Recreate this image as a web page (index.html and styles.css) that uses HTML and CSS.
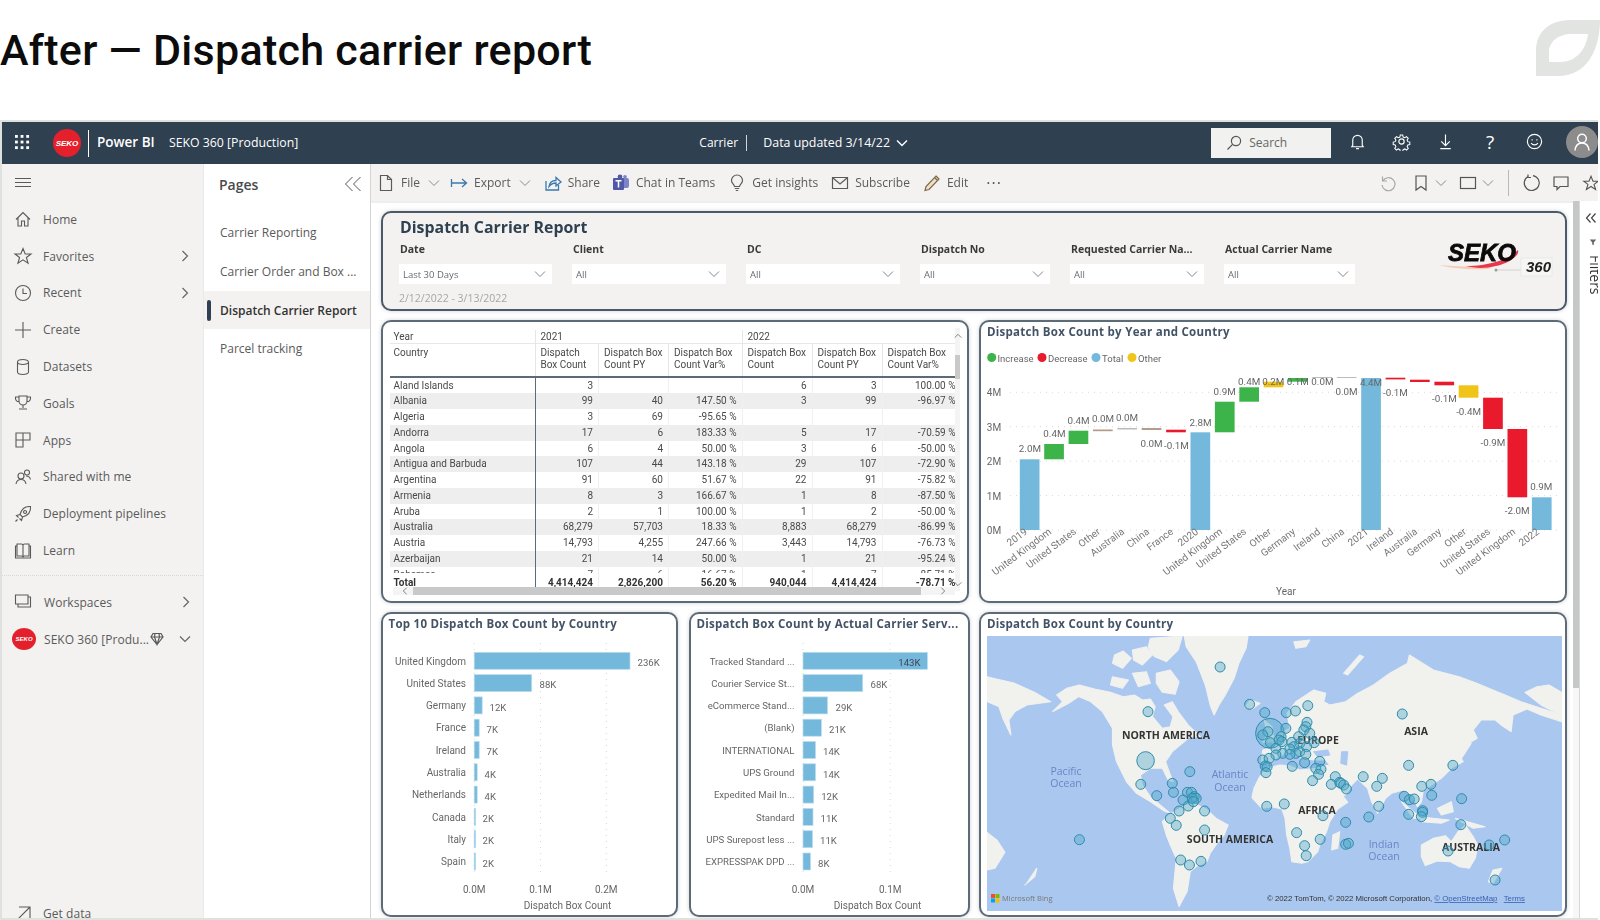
FILE: index.html
```html
<!DOCTYPE html>
<html lang="en">
<head>
<meta charset="utf-8">
<title>After — Dispatch carrier report</title>
<link rel="stylesheet" href="styles.css">
</head>
<body>
<svg class="sprite" aria-hidden="true">
  <symbol id="chev-d" viewBox="0 0 12 12"><path d="M1 3.5L6 8.5L11 3.5"/></symbol>
  <symbol id="chev-r" viewBox="0 0 12 12"><path d="M3.5 1L8.5 6L3.5 11"/></symbol>
  <symbol id="star" viewBox="0 0 20 20"><path d="M10 2.5L12.2 8H18L13.4 11.5L15.1 17.3L10 13.9L4.9 17.3L6.6 11.5L2 8H7.8Z"/></symbol>
</svg>
<header class="slide-head">
  <h1 class="slide-title">After — Dispatch carrier report</h1>
  <svg class="leaf" viewBox="0 0 64 56"><path class="leaf-shape" fill-rule="evenodd" d="M0 56V32C0 12 12 1 34 0H64C64 28 52 56 22 56ZM13 42H24C40 42 50 30 52 14H36C22 14 13 22 13 32Z"/></svg>
</header>
<div class="app">
  <div class="topbar">
    <svg class="waffle" viewBox="0 0 16 16"><g class="waffle-dots"><rect x="0" y="0" width="3" height="3"/><rect x="6" y="0" width="3" height="3"/><rect x="12" y="0" width="3" height="3"/><rect x="0" y="6" width="3" height="3"/><rect x="6" y="6" width="3" height="3"/><rect x="12" y="6" width="3" height="3"/><rect x="0" y="12" width="3" height="3"/><rect x="6" y="12" width="3" height="3"/><rect x="12" y="12" width="3" height="3"/></g></svg>
    <span class="seko-dot seko-dot-top">SEKO</span>
    <span class="brand">Power BI</span>
    <span class="ws-name">SEKO 360 [Production]</span>
    <span class="crumb">Carrier</span>
    <span class="crumb-sep"></span>
    <span class="crumb-data">Data updated 3/14/22</span>
    <svg class="ic-12 ic-white"><use href="#chev-d"/></svg>
    <div class="search">
      <svg class="ic-16 search-ic" viewBox="0 0 16 16"><circle cx="10" cy="6" r="4.6"/><path d="M6.6 9.4L1.5 14.5"/></svg>
      <span>Search</span>
    </div>
    <svg class="tb-ic tb-first" viewBox="0 0 20 20"><path d="M5 14V8.5a5 5 0 0 1 10 0V14L16 15.5H4Z M8.5 17.5h3"/></svg>
    <svg class="tb-ic" viewBox="0 0 20 20"><circle cx="10" cy="10" r="2.8"/><path d="M8.6 2.5h2.800l.5 2.300 1.900.8 2-1.300 2 2-1.300 2 .8 1.900 2.300.5v2.800l-2.300.5-.8 1.900 1.300 2-2 2-2-1.300-1.900.8-.5 2.300h-2.800l-.5-2.300-1.900-.8-2 1.300-2-2 1.300-2-.8-1.900-2.300-.5v-2.800l2.300-.5.8-1.900-1.300-2 2-2 2 1.300 1.900-.8Z" transform="translate(.9 .9) scale(.91)"/></svg>
    <svg class="tb-ic" viewBox="0 0 20 20"><path d="M10 2.500V14 M5.500 9.800L10 14.300L14.500 9.800 M4.500 17.500H15.500"/></svg>
    <span class="help">?</span>
    <svg class="tb-ic" viewBox="0 0 20 20"><circle cx="10" cy="10" r="7.500"/><path d="M6.500 11.500a4 4 0 0 0 7 0 M7.500 7.500v1.500 M12.500 7.500v1.500"/></svg>
    <span class="avatar"><svg class="avatar-ic" viewBox="0 0 20 20"><circle cx="10" cy="6.500" r="4.300"/><path d="M3 18.500c.5-5 3.500-7.500 7-7.500s6.500 2.500 7 7.500"/></svg></span>
  </div>

  <div class="main">
    <nav class="nav">
      <div class="nav-burger"><svg class="nav-ic" viewBox="0 0 20 20"><path d="M2 5.500H18 M2 9.500H18 M2 13.500H18"/></svg></div>
      <a class="nav-item"><svg class="nav-ic" viewBox="0 0 20 20"><path d="M3 10.500L10 3.500L17 10.500 M5 9V17H8.500V12H11.500V17H15V9"/></svg>Home</a>
      <a class="nav-item"><svg class="nav-ic"><use href="#star"/></svg>Favorites<svg class="ic-12 nav-chev"><use href="#chev-r"/></svg></a>
      <a class="nav-item"><svg class="nav-ic" viewBox="0 0 20 20"><circle cx="10" cy="10" r="7.500"/><path d="M10 5.500V10.500H14"/></svg>Recent<svg class="ic-12 nav-chev"><use href="#chev-r"/></svg></a>
      <a class="nav-item"><svg class="nav-ic" viewBox="0 0 20 20"><path d="M10 2V18 M2 10H18"/></svg>Create</a>
      <a class="nav-item"><svg class="nav-ic" viewBox="0 0 20 20"><path d="M4.500 5a5.500 2.500 0 0 1 11 0V15a5.500 2.500 0 0 1-11 0Z M4.500 5a5.500 2.500 0 0 0 11 0"/></svg>Datasets</a>
      <a class="nav-item"><svg class="nav-ic" viewBox="0 0 20 20"><path d="M6 3H14V8a4 4 0 0 1-8 0Z M6 4H2.500V5.500A3 3 0 0 0 6 8.500 M14 4H17.500V5.500A3 3 0 0 1 14 8.500 M10 12V15 M6 16H14"/></svg>Goals</a>
      <a class="nav-item"><svg class="nav-ic" viewBox="0 0 20 20"><path d="M3 3H17V10H10V17H3Z M10 3V10 M3 10H10"/></svg>Apps</a>
      <a class="nav-item"><svg class="nav-ic" viewBox="0 0 20 20"><circle cx="8" cy="9" r="3"/><path d="M3 17c.5-3 2.500-4.500 5-4.500s4.500 1.500 5 4.500"/><circle cx="14" cy="5.500" r="2.500"/><path d="M13 9c2.500 0 4 1 4.500 3.500"/></svg>Shared with me</a>
      <a class="nav-item"><svg class="nav-ic" viewBox="0 0 20 20"><path d="M17.500 2.500c-5-.5-9 2.500-10.500 8L9.500 13c5.500-1.500 8.500-5.500 8-10.500Z M7 10.500L3.500 11.500L5.500 13.500 M9.500 13L8.500 16.500L6.500 14.500 M12 6.500a1.500 1.500 0 1 0 .1 0 M4.500 15.500L2.500 17.500"/></svg>Deployment pipelines</a>
      <a class="nav-item"><svg class="nav-ic" viewBox="0 0 20 20"><path d="M4 3H8.500A1.500 1.500 0 0 1 10 4.500V16A1.500 1.500 0 0 0 8.500 15H4Z M16 3H11.500A1.500 1.500 0 0 0 10 4.500V16A1.500 1.500 0 0 1 11.500 15H16Z M4 5H2.500V17H17.500V5H16"/></svg>Learn</a>
      <div class="nav-rule"></div>
      <a class="nav-item nav-item-ws"><svg class="nav-ic" viewBox="0 0 20 20"><path d="M2.500 3H15V12H2.500Z M15 5H17.500V15H5V12"/></svg>Workspaces<svg class="ic-12 nav-chev"><use href="#chev-r"/></svg></a>
      <a class="nav-item nav-item-seko"><span class="seko-dot seko-dot-nav">SEKO</span><span class="seko-name">SEKO 360 [Produ...</span><svg class="ic-14" viewBox="0 0 14 14"><path d="M3 1.500H11L13 5L7 12.500L1 5Z M1 5H13 M5 1.500L4.500 5L7 12.500L9.500 5L9 1.500"/></svg><svg class="ic-12 nav-chev"><use href="#chev-d"/></svg></a>
      <a class="nav-item nav-item-get"><svg class="nav-ic" viewBox="0 0 20 20"><path d="M3 17L17 3 M6 3H17V14"/></svg>Get data</a>
    </nav>

    <aside class="pages">
      <div class="pages-head"><span class="pages-title">Pages</span>
        <svg class="pages-collapse" viewBox="0 0 18 16"><path d="M8.500 1L1.500 8L8.500 15 M16.500 1L9.500 8L16.500 15"/></svg></div>
      <a class="page-item">Carrier Reporting</a>
      <a class="page-item">Carrier Order and Box ...</a>
      <a class="page-item page-item-active">Dispatch Carrier Report</a>
      <a class="page-item">Parcel tracking</a>
    </aside>

    <section class="content">
      <div class="toolbar">
        <span class="tool tool-file"><svg class="ic-18" viewBox="0 0 18 18"><path d="M3.500 1.500H10.500L14.500 5.500V16.500H3.500Z M10.500 1.500V5.500H14.500"/></svg>File<svg class="ic-12 tool-chev"><use href="#chev-d"/></svg></span>
        <span class="tool tool-export"><svg class="ic-18 ic-blue" viewBox="0 0 18 18"><path d="M1.500 5V13 M1.500 9H16 M12 5L16.500 9L12 13"/></svg>Export<svg class="ic-12 tool-chev"><use href="#chev-d"/></svg></span>
        <span class="tool tool-share"><svg class="ic-18 ic-blue" viewBox="0 0 18 18"><path d="M2 7V16H14.500V11 M5 12.500c.5-4 3-6 7-6V3.500L17 8L12 12V9C9 9 7 10 5 12.500Z"/></svg>Share</span>
        <span class="tool tool-teams"><svg class="ic-18" viewBox="0 0 18 18"><rect class="teams-a" x="9" y="4" width="8" height="10" rx="2"/><circle class="teams-a" cx="13" cy="2.800" r="1.800"/><circle class="teams-b" cx="8" cy="2.800" r="2.400"/><rect class="teams-b" x="1" y="4" width="11" height="12" rx="1"/><path class="teams-t" d="M3.500 6.800H9.500 M6.500 6.800V13.500"/></svg>Chat in Teams</span>
        <span class="tool tool-ins"><svg class="ic-18" viewBox="0 0 18 18"><path d="M6.500 12.500C6 10 3.500 9.500 3.500 6.500a5.500 5.500 0 0 1 11 0C14.500 9.500 12 10 11.500 12.500Z M6.800 14.500H11.200 M7.800 16.500H10.200"/></svg>Get insights</span>
        <span class="tool tool-sub"><svg class="ic-18" viewBox="0 0 18 18"><path d="M1.500 3.500H16.500V14.500H1.500Z M2 4L9 10L16 4"/></svg>Subscribe</span>
        <span class="tool tool-edit"><svg class="ic-18" viewBox="0 0 18 18"><path class="pencil" d="M13 2L16 5L6 15.500L2 16.500L3 12.500Z M11.500 3.500L14.500 6.500"/></svg>Edit</span>
        <span class="tool-dots">···</span>
        <span class="tool-right">
          <svg class="ic-18 ic-faint" viewBox="0 0 18 18"><path d="M3.500 2.500V7H8 M3.800 7a6.500 6.500 0 1 1-.8 4"/></svg>
          <svg class="ic-18 gap-a" viewBox="0 0 18 18"><path d="M4 2H14V16L9 12.500L4 16Z"/></svg>
          <svg class="ic-12 tool-chev gap-b"><use href="#chev-d"/></svg>
          <svg class="ic-18 gap-c" viewBox="0 0 18 18"><rect x="1.500" y="3.500" width="15" height="11"/></svg>
          <svg class="ic-12 tool-chev gap-b"><use href="#chev-d"/></svg>
          <span class="tool-sep"></span>
          <svg class="ic-18 gap-d" viewBox="0 0 18 18"><path d="M5 2.500a7.500 7.500 0 1 0 5-.9 M5 .5V3.500H8"/></svg>
          <svg class="ic-18 gap-e" viewBox="0 0 18 18"><path d="M2 3H16V12.500H8L5 15.500V12.500H2Z"/></svg>
          <svg class="ic-18 gap-e"><use href="#star"/></svg>
        </span>
      </div>

      <div class="stage">
        <div class="canvas">
          <div class="card filter-card">
            <div class="report-title">Dispatch Carrier Report</div>
            <div class="slicer-row">
              <div class="slicer s-a"><div class="slicer-label">Date</div><div class="dropdown"><span>Last 30 Days</span><svg class="ic-12"><use href="#chev-d"/></svg></div><div class="date-range">2/12/2022 - 3/13/2022</div></div>
              <div class="slicer s-b"><div class="slicer-label">Client</div><div class="dropdown"><span>All</span><svg class="ic-12"><use href="#chev-d"/></svg></div></div>
              <div class="slicer s-b"><div class="slicer-label">DC</div><div class="dropdown"><span>All</span><svg class="ic-12"><use href="#chev-d"/></svg></div></div>
              <div class="slicer s-c"><div class="slicer-label">Dispatch No</div><div class="dropdown"><span>All</span><svg class="ic-12"><use href="#chev-d"/></svg></div></div>
              <div class="slicer s-d"><div class="slicer-label">Requested Carrier Na...</div><div class="dropdown"><span>All</span><svg class="ic-12"><use href="#chev-d"/></svg></div></div>
              <div class="slicer s-e"><div class="slicer-label">Actual Carrier Name</div><div class="dropdown"><span>All</span><svg class="ic-12"><use href="#chev-d"/></svg></div></div>
              <svg class="seko-logo" viewBox="0 0 118 38">
                <path class="swoosh-o" d="M1 26C30 29 55 27 70 21L50 30C30 31 12 29 1 26Z"/>
                <path class="swoosh-r" d="M28 27C50 27 70 21 80 11C82 16 72 24 58 27C46 30 36 29 28 27Z"/>
                <text class="seko-word" x="10" y="22">SEKO</text>
                <path class="logo-line" d="M58 31H84"/><circle class="logo-knob" cx="58" cy="31" r="1.500"/>
                <rect class="logo-box" x="83" y="19" width="31" height="18"/>
                <text class="seko-360" x="88" y="33">360</text>
              </svg>
            </div>
          </div>

          <div class="row-mid">
            <div class="card table-card">
              <div class="matrix">
                <div class="tr tr-year"><div class="td td-l">Year</div><div class="td-span-a">2021</div><div class="td-span-b">2022</div></div>
                <div class="tr tr-head"><div class="td td-l">Country</div><div class="th th-first">Dispatch Box Count</div><div class="th">Dispatch Box Count PY</div><div class="th">Dispatch Box Count Var%</div><div class="th">Dispatch Box Count</div><div class="th">Dispatch Box Count PY</div><div class="th">Dispatch Box Count Var%</div></div>
                <div class="matrix-body">
                  <div class="tr"><div class="td td-l">Aland Islands</div><div class="td">3</div><div class="td"></div><div class="td"></div><div class="td">6</div><div class="td">3</div><div class="td">100.00 %</div></div>
                  <div class="tr tr-b"><div class="td td-l">Albania</div><div class="td">99</div><div class="td">40</div><div class="td">147.50 %</div><div class="td">3</div><div class="td">99</div><div class="td">-96.97 %</div></div>
                  <div class="tr"><div class="td td-l">Algeria</div><div class="td">3</div><div class="td">69</div><div class="td">-95.65 %</div><div class="td"></div><div class="td"></div><div class="td"></div></div>
                  <div class="tr tr-b"><div class="td td-l">Andorra</div><div class="td">17</div><div class="td">6</div><div class="td">183.33 %</div><div class="td">5</div><div class="td">17</div><div class="td">-70.59 %</div></div>
                  <div class="tr"><div class="td td-l">Angola</div><div class="td">6</div><div class="td">4</div><div class="td">50.00 %</div><div class="td">3</div><div class="td">6</div><div class="td">-50.00 %</div></div>
                  <div class="tr tr-b"><div class="td td-l">Antigua and Barbuda</div><div class="td">107</div><div class="td">44</div><div class="td">143.18 %</div><div class="td">29</div><div class="td">107</div><div class="td">-72.90 %</div></div>
                  <div class="tr"><div class="td td-l">Argentina</div><div class="td">91</div><div class="td">60</div><div class="td">51.67 %</div><div class="td">22</div><div class="td">91</div><div class="td">-75.82 %</div></div>
                  <div class="tr tr-b"><div class="td td-l">Armenia</div><div class="td">8</div><div class="td">3</div><div class="td">166.67 %</div><div class="td">1</div><div class="td">8</div><div class="td">-87.50 %</div></div>
                  <div class="tr"><div class="td td-l">Aruba</div><div class="td">2</div><div class="td">1</div><div class="td">100.00 %</div><div class="td">1</div><div class="td">2</div><div class="td">-50.00 %</div></div>
                  <div class="tr tr-b"><div class="td td-l">Australia</div><div class="td">68,279</div><div class="td">57,703</div><div class="td">18.33 %</div><div class="td">8,883</div><div class="td">68,279</div><div class="td">-86.99 %</div></div>
                  <div class="tr"><div class="td td-l">Austria</div><div class="td">14,793</div><div class="td">4,255</div><div class="td">247.66 %</div><div class="td">3,443</div><div class="td">14,793</div><div class="td">-76.73 %</div></div>
                  <div class="tr tr-b"><div class="td td-l">Azerbaijan</div><div class="td">21</div><div class="td">14</div><div class="td">50.00 %</div><div class="td">1</div><div class="td">21</div><div class="td">-95.24 %</div></div>
                  <div class="tr"><div class="td td-l">Bahamas</div><div class="td">7</div><div class="td">6</div><div class="td">16.67 %</div><div class="td">1</div><div class="td">7</div><div class="td">-85.71 %</div></div>
                </div>
                <div class="tr tr-total"><div class="td td-l">Total</div><div class="td">4,414,424</div><div class="td">2,826,200</div><div class="td">56.20 %</div><div class="td">940,044</div><div class="td">4,414,424</div><div class="td">-78.71 %</div></div>
              </div>
              <div class="vscroll"><svg class="ic-8"><use href="#chev-d" class="flip"/></svg><span class="vthumb"></span><svg class="ic-8 vdown"><use href="#chev-d"/></svg></div>
              <div class="hscroll"><svg class="ic-8"><use href="#chev-r" class="flip"/></svg><span class="hthumb"></span><svg class="ic-8"><use href="#chev-r"/></svg></div>
            </div>

            <div class="card chart-card">
              <div class="card-title">Dispatch Box Count by Year and Country</div>
              <svg class="chart" viewBox="981 342 584 259">
                <g class="legend">
                  <circle class="f-g" cx="991.700" cy="357.500" r="4.500"/><text x="997.500" y="361.500">Increase</text>
                  <circle class="f-r" cx="1042" cy="357.500" r="4.500"/><text x="1048" y="361.500">Decrease</text>
                  <circle class="f-b" cx="1096" cy="357.500" r="4.500"/><text x="1102" y="361.500">Total</text>
                  <circle class="f-y" cx="1132" cy="357.500" r="4.500"/><text x="1138" y="361.500">Other</text>
                </g>
                <g class="grid-h"><path d="M1010 392.300H1560"/><path d="M1010 426.700H1560"/><path d="M1010 461.200H1560"/><path d="M1010 495.600H1560"/><path d="M1010 530H1560"/></g>
                <g class="axis-y"><text x="994" y="396">4M</text><text x="994" y="431">3M</text><text x="994" y="465">2M</text><text x="994" y="500">1M</text><text x="994" y="534">0M</text></g>
                <g class="wf">
                  <rect class="f-b" x="1019.800" y="459.300" width="19.700" height="70.700"/>
                  <rect class="f-g" x="1044.200" y="444" width="19.700" height="15.300"/>
                  <rect class="f-g" x="1068.600" y="430.700" width="19.700" height="13.300"/>
                  <rect class="f-br" x="1093" y="429.500" width="19.700" height="1.700"/>
                  <rect class="f-gr" x="1117.400" y="428" width="19.700" height="1.500"/>
                  <rect class="f-br" x="1141.700" y="428" width="19.700" height="2"/>
                  <rect class="f-r" x="1166.100" y="429.700" width="19.700" height="2.600"/>
                  <rect class="f-b" x="1190.500" y="432.300" width="19.700" height="97.700"/>
                  <rect class="f-g" x="1214.900" y="401.700" width="19.700" height="30.600"/>
                  <rect class="f-g" x="1239.300" y="387.300" width="19.700" height="14.400"/>
                  <rect class="f-y" x="1263.700" y="381.700" width="19.700" height="5.600"/>
                  <rect class="f-g" x="1288" y="378" width="19.700" height="3.700"/>
                  <rect class="f-gr" x="1312.400" y="377" width="19.700" height="1"/>
                  <rect class="f-gr" x="1336.800" y="377" width="19.700" height="1"/>
                  <rect class="f-b" x="1361.200" y="378" width="19.700" height="152"/>
                  <rect class="f-r" x="1385.600" y="377.700" width="19.700" height="1.700"/>
                  <rect class="f-r" x="1410" y="379.700" width="19.700" height="2.300"/>
                  <rect class="f-r" x="1434.400" y="381.700" width="19.700" height="3.600"/>
                  <rect class="f-y" x="1458.700" y="385.300" width="19.700" height="12.400"/>
                  <rect class="f-r" x="1483.100" y="397.700" width="19.700" height="31.300"/>
                  <rect class="f-r" x="1507.500" y="429" width="19.700" height="68.300"/>
                  <rect class="f-b" x="1531.900" y="497.300" width="19.700" height="32.700"/>
                </g>
                <g class="wf-lab">
                  <text x="1029.900" y="452">2.0M</text><text x="1054.400" y="437">0.4M</text><text x="1078.500" y="424">0.4M</text><text x="1103" y="422">0.0M</text><text x="1127" y="421">0.0M</text><text x="1151.600" y="446.500">0.0M</text><text x="1176.500" y="448.500">-0.1M</text><text x="1200.600" y="425.500">2.8M</text><text x="1224.700" y="394.500">0.9M</text><text x="1249.200" y="385">0.4M</text><text x="1273.300" y="385">0.2M</text><text x="1297.800" y="385">0.1M</text><text x="1322.400" y="385">0.0M</text><text x="1346.500" y="394.500">0.0M</text><text x="1371" y="385.500">4.4M</text><text x="1395.500" y="396">-0.1M</text><text x="1444.500" y="402">-0.1M</text><text x="1468.600" y="414.500">-0.4M</text><text x="1493" y="445.500">-0.9M</text><text x="1517.200" y="514">-2.0M</text><text x="1541.300" y="490">0.9M</text>
                </g>
                <g class="cat" transform="translate(-6 -7)">
                  <text transform="translate(1034 540) rotate(-37)">2019</text><text transform="translate(1058 540) rotate(-37)">United Kingdom</text><text transform="translate(1083 540) rotate(-37)">United States</text><text transform="translate(1107 540) rotate(-37)">Other</text><text transform="translate(1131 540) rotate(-37)">Australia</text><text transform="translate(1156 540) rotate(-37)">China</text><text transform="translate(1180 540) rotate(-37)">France</text><text transform="translate(1205 540) rotate(-37)">2020</text><text transform="translate(1229 540) rotate(-37)">United Kingdom</text><text transform="translate(1253 540) rotate(-37)">United States</text><text transform="translate(1278 540) rotate(-37)">Other</text><text transform="translate(1302 540) rotate(-37)">Germany</text><text transform="translate(1327 540) rotate(-37)">Ireland</text><text transform="translate(1351 540) rotate(-37)">China</text><text transform="translate(1375 540) rotate(-37)">2021</text><text transform="translate(1400 540) rotate(-37)">Ireland</text><text transform="translate(1424 540) rotate(-37)">Australia</text><text transform="translate(1448 540) rotate(-37)">Germany</text><text transform="translate(1473 540) rotate(-37)">Other</text><text transform="translate(1497 540) rotate(-37)">United States</text><text transform="translate(1522 540) rotate(-37)">United Kingdom</text><text transform="translate(1546 540) rotate(-37)">2022</text>
                </g>
                <text class="axis-title" x="1286" y="595">Year</text>
              </svg>
            </div>
          </div>

          <div class="row-bot">
            <div class="card bar-card-a">
              <div class="card-title">Top 10 Dispatch Box Count by Country</div>
              <svg class="chart" viewBox="382.500 634 293 281">
                <g class="grid-v"><path d="M473.700 643V875"/><path d="M540 643V875"/><path d="M605.800 643V875"/></g>
                <g class="hbar">
                  <rect x="473.700" y="652.300" width="155.800" height="17"/><rect x="473.700" y="674.600" width="57.500" height="17"/><rect x="473.700" y="696.900" width="8" height="17"/><rect x="473.700" y="719.200" width="5" height="17"/><rect x="473.700" y="741.500" width="5" height="17"/><rect x="473.700" y="763.800" width="3" height="17"/><rect x="473.700" y="786.100" width="3" height="17"/><rect x="473.700" y="808.400" width="1.500" height="17"/><rect x="473.700" y="830.700" width="1.500" height="17"/><rect x="473.700" y="853" width="1.500" height="17"/>
                </g>
                <g class="cat-l">
                  <text x="465.500" y="664.500">United Kingdom</text><text x="465.500" y="686.800">United States</text><text x="465.500" y="709">Germany</text><text x="465.500" y="731.400">France</text><text x="465.500" y="753.700">Ireland</text><text x="465.500" y="776">Australia</text><text x="465.500" y="798.300">Netherlands</text><text x="465.500" y="820.600">Canada</text><text x="465.500" y="842.900">Italy</text><text x="465.500" y="865.200">Spain</text>
                </g>
                <g class="val">
                  <text x="637" y="666">236K</text><text x="539" y="688.300">88K</text><text x="489" y="710.600">12K</text><text x="486" y="732.900">7K</text><text x="486" y="755.200">7K</text><text x="484" y="777.500">4K</text><text x="484" y="799.800">4K</text><text x="482" y="822.100">2K</text><text x="482" y="844.400">2K</text><text x="482" y="866.700">2K</text>
                </g>
                <g class="tick"><text x="473.700" y="892.500">0.0M</text><text x="540" y="892.500">0.1M</text><text x="605.800" y="892.500">0.2M</text></g>
                <text class="axis-title" x="567" y="908.500">Dispatch Box Count</text>
              </svg>
            </div>
            <div class="card bar-card-b">
              <div class="card-title">Dispatch Box Count by Actual Carrier Serv...</div>
              <svg class="chart" viewBox="690.500 634 277 281">
                <g class="grid-v"><path d="M802.500 643V875"/><path d="M889.700 643V875"/></g>
                <g class="hbar">
                  <rect x="802.500" y="652.300" width="124.400" height="17"/><rect x="802.500" y="674.600" width="59.700" height="17"/><rect x="802.500" y="696.900" width="24.500" height="17"/><rect x="802.500" y="719.200" width="18.400" height="17"/><rect x="802.500" y="741.500" width="12.500" height="17"/><rect x="802.500" y="763.800" width="12.500" height="17"/><rect x="802.500" y="786.100" width="10.700" height="17"/><rect x="802.500" y="808.400" width="10" height="17"/><rect x="802.500" y="830.700" width="9.500" height="17"/><rect x="802.500" y="853" width="7.500" height="17"/>
                </g>
                <g class="cat-l">
                  <text x="794" y="664.500">Tracked Standard ...</text><text x="794" y="686.800">Courier Service St...</text><text x="794" y="709">eCommerce Stand...</text><text x="794" y="731.400">(Blank)</text><text x="794" y="753.700">INTERNATIONAL</text><text x="794" y="776">UPS Ground</text><text x="794" y="798.300">Expedited Mail In...</text><text x="794" y="820.600">Standard</text><text x="794" y="842.900">UPS Surepost less ...</text><text x="794" y="865.200">EXPRESSPAK DPD ...</text>
                </g>
                <g class="val">
                  <text class="val-in" x="920" y="666">143K</text><text x="870" y="688.300">68K</text><text x="835" y="710.600">29K</text><text x="828.500" y="732.900">21K</text><text x="822.500" y="755.200">14K</text><text x="822.500" y="777.500">14K</text><text x="820.700" y="799.800">12K</text><text x="820" y="822.100">11K</text><text x="819.500" y="844.400">11K</text><text x="817.500" y="866.700">8K</text>
                </g>
                <g class="tick"><text x="802.500" y="892.500">0.0M</text><text x="889.700" y="892.500">0.1M</text></g>
                <text class="axis-title" x="877" y="908.500">Dispatch Box Count</text>
              </svg>
            </div>
            <div class="card map-card">
              <div class="card-title">Dispatch Box Count by Country</div>
              <svg class="chart" viewBox="981 634 584 281">
                <svg x="987" y="636" width="575" height="275" viewBox="987 636 575 275">
                  <rect class="ocean" x="987" y="636" width="575" height="275"/>
                  <g class="land" transform="translate(975 605) scale(.39856 .33333)">
                    <path d="M525 93H685L680 130L662 175L650 220L628 270L612 300L600 330L590 300L578 240L555 170L530 125Z"/>
                    <path d="M205 270L230 250L262 240L300 252L340 262L372 275L400 270L420 285L440 282L452 305L445 335L470 370L490 365L497 335L475 300L495 290L510 320L535 360L565 395L540 395L520 415L505 430L495 440L478 470L490 510L497 530L485 525L470 490L440 490L415 510L420 540L440 575L465 600L490 625L475 618L440 590L405 565L380 530L355 470L345 420L345 370L320 320L290 290L260 275L235 295L195 320L220 290Z"/>
                    <path d="M350 150L372 138L392 160L370 190L345 175Z M395 135L430 125L445 150L420 180L398 165Z M440 100L520 93L510 135L480 170L450 155L435 125Z M455 205L490 195L512 230L502 268L470 262L455 235Z M345 215L385 225L370 250L340 240Z M395 205L430 200L440 235L410 245Z"/>
                    <path d="M492 625L530 600L555 598L580 612L605 640L635 660L625 690L610 710L590 745L582 770L555 785L540 800L532 860L512 905L498 850L505 760L490 720L480 690L470 650Z"/>
                    <path d="M700 550L712 520L730 490L765 480L790 482L815 495L860 490L880 505L900 520L915 560L935 592L910 612L890 650L882 680L865 720L860 740L835 770L820 775L795 770L790 730L782 690L778 640L770 612L745 605L720 610L695 578Z"/>
                    <path d="M718 470L722 435L750 425L745 405L765 385L790 370L783 325L805 290L850 255L880 265L875 290L890 300L930 290L960 265L1000 240L1040 205L1085 175L1090 150L1150 195L1215 215L1260 235L1330 270L1370 290L1472 330V350L1420 330L1385 312L1350 330L1345 380L1320 360L1305 345L1270 345L1250 375L1260 400L1225 425L1210 440L1225 470L1195 490L1170 520L1145 540L1125 555L1120 590L1110 605L1095 570L1075 555L1045 565L1030 580L1010 625L995 590L985 550L960 522L945 540L930 570L895 575L870 530L855 490L890 480L880 465L850 465L820 460L800 440L780 445L760 455L745 470Z"/>
                    <path d="M1120 720L1150 700L1180 692L1195 710L1212 680L1230 660L1250 695L1262 722L1255 760L1240 790L1215 785L1192 770L1160 768L1130 782L1120 755Z"/>
                    <path d="M30 215L100 235L150 262L190 290L130 300L100 320L85 345L90 390L70 340L60 305L30 290Z M1380 262L1410 245L1440 240L1472 262V332L1420 300Z M30 682L55 705L75 742L50 790L30 795Z"/>
                    <path d="M690 285L715 295L695 312L678 305Z M725 345L745 365L750 410L722 412L735 385Z M1195 445L1225 420L1245 415L1215 470L1190 475Z M898 690L915 680L910 730L895 735Z M1070 590L1120 640L1100 640Z M1115 635L1190 645L1170 655L1120 650Z M1160 610L1195 590L1200 620L1170 630Z M1205 640L1280 665L1250 670Z M1300 795L1322 790L1300 835L1288 830Z M925 205L965 150L975 155L935 210Z M130 835L155 790L150 815L125 840Z M800 110L840 105L830 125L805 130Z"/>
                    <path class="water" d="M850 440L885 435L890 450L860 455Z M920 440L935 440L932 480L918 475Z"/>
                  </g>
                  <g class="map-lab">
                    <text x="1166" y="739">NORTH AMERICA</text><text x="1318" y="744">EUROPE</text><text x="1416" y="735">ASIA</text><text x="1317" y="814">AFRICA</text><text x="1230" y="843">SOUTH AMERICA</text><text x="1471" y="851">AUSTRALIA</text>
                  </g>
                  <g class="map-sea">
                    <text x="1066" y="775">Pacific</text><text x="1066" y="787">Ocean</text><text x="1230" y="778">Atlantic</text><text x="1230" y="791">Ocean</text><text x="1384" y="848">Indian</text><text x="1384" y="860">Ocean</text>
                  </g>
                  <g class="bub" transform="translate(975 605) scale(.39856 .33333)">
                    <ellipse class="b-xl" cx="740" cy="385"/><ellipse class="b-lg" cx="428" cy="467"/>
                    <ellipse cx="615" cy="186"/><ellipse cx="434" cy="320"/><ellipse cx="689" cy="298"/><ellipse cx="727" cy="323"/><ellipse cx="781" cy="323"/><ellipse cx="804" cy="318"/><ellipse cx="835" cy="302"/><ellipse cx="1072" cy="327"/><ellipse cx="833" cy="352"/><ellipse cx="830" cy="365"/><ellipse cx="780" cy="370"/><ellipse cx="825" cy="375"/><ellipse cx="840" cy="385"/><ellipse cx="735" cy="380"/><ellipse cx="722" cy="390"/><ellipse cx="768" cy="395"/><ellipse cx="812" cy="395"/><ellipse cx="763" cy="405"/><ellipse cx="770" cy="410"/><ellipse cx="741" cy="413"/><ellipse cx="851" cy="413"/><ellipse cx="795" cy="412"/><ellipse cx="815" cy="415"/><ellipse cx="800" cy="425"/><ellipse cx="790" cy="432"/><ellipse cx="815" cy="440"/><ellipse cx="805" cy="445"/><ellipse cx="832" cy="425"/><ellipse cx="830" cy="448"/><ellipse cx="755" cy="430"/><ellipse cx="772" cy="445"/><ellipse cx="755" cy="450"/><ellipse cx="790" cy="448"/><ellipse cx="722" cy="465"/><ellipse cx="738" cy="460"/><ellipse cx="728" cy="483"/><ellipse cx="733" cy="485"/><ellipse cx="730" cy="503"/><ellipse cx="796" cy="484"/><ellipse cx="827" cy="473"/><ellipse cx="865" cy="469"/><ellipse cx="855" cy="490"/><ellipse cx="868" cy="493"/><ellipse cx="862" cy="508"/><ellipse cx="847" cy="527"/><ellipse cx="904" cy="515"/><ellipse cx="894" cy="538"/><ellipse cx="915" cy="532"/><ellipse cx="918" cy="535"/><ellipse cx="925" cy="540"/><ellipse cx="932" cy="552"/><ellipse cx="974" cy="515"/><ellipse cx="1022" cy="520"/><ellipse cx="1008" cy="544"/><ellipse cx="1088" cy="481"/><ellipse cx="1199" cy="481"/><ellipse cx="1121" cy="544"/><ellipse cx="1144" cy="538"/><ellipse cx="1146" cy="571"/><ellipse cx="1077" cy="574"/><ellipse cx="1090" cy="584"/><ellipse cx="1102" cy="582"/><ellipse cx="1221" cy="581"/><ellipse cx="1013" cy="604"/><ellipse cx="988" cy="636"/><ellipse cx="930" cy="652"/><ellipse cx="1088" cy="628"/><ellipse cx="1123" cy="617"/><ellipse cx="1123" cy="622"/><ellipse cx="1120" cy="635"/><ellipse cx="1219" cy="659"/><ellipse cx="873" cy="632"/><ellipse cx="732" cy="604"/><ellipse cx="776" cy="597"/><ellipse cx="539" cy="500"/><ellipse cx="495" cy="535"/><ellipse cx="498" cy="562"/><ellipse cx="416" cy="538"/><ellipse cx="456" cy="572"/><ellipse cx="533" cy="562"/><ellipse cx="543" cy="562"/><ellipse cx="550" cy="575"/><ellipse cx="555" cy="580"/><ellipse cx="545" cy="580"/><ellipse cx="522" cy="585"/><ellipse cx="535" cy="603"/><ellipse cx="548" cy="590"/><ellipse cx="512" cy="618"/><ellipse cx="576" cy="618"/><ellipse cx="490" cy="640"/><ellipse cx="505" cy="661"/><ellipse cx="576" cy="675"/><ellipse cx="807" cy="683"/><ellipse cx="866" cy="703"/><ellipse cx="827" cy="722"/><ellipse cx="831" cy="752"/><ellipse cx="930" cy="718"/><ellipse cx="937" cy="715"/><ellipse cx="262" cy="704"/><ellipse cx="516" cy="765"/><ellipse cx="538" cy="780"/><ellipse cx="567" cy="769"/><ellipse cx="1187" cy="738"/><ellipse cx="1290" cy="720"/><ellipse cx="1329" cy="705"/><ellipse cx="1305" cy="825"/>
                  </g>
                  <g class="ms-logo"><rect class="ms-r" x="991" y="894" width="4" height="4"/><rect class="ms-g" x="995.500" y="894" width="4" height="4"/><rect class="ms-b" x="991" y="898.500" width="4" height="4"/><rect class="ms-y" x="995.500" y="898.500" width="4" height="4"/></g>
                  <text class="ms-text" x="1002" y="901">Microsoft Bing</text>
                  <text class="map-copy" x="1267" y="901">© 2022 TomTom, © 2022 Microsoft Corporation, <tspan class="map-link">© OpenStreetMap</tspan>   <tspan class="map-link">Terms</tspan></text>
                </svg>
              </svg>
            </div>
          </div>
        </div>
        <div class="page-scroll"><span class="page-thumb"></span></div>
        <div class="filters">
          <svg class="filters-ic" viewBox="0 0 12 12"><path d="M5.500 1.500L1.500 6L5.500 10.500 M10.500 1.500L6.500 6L10.500 10.500"/></svg>
          <svg class="filters-fn" viewBox="0 0 10 10"><path d="M1 2H9L6 5.500V9L4 8V5.500Z"/></svg>
          <span class="filters-label">Filters</span>
        </div>
      </div>
    </section>
  </div>
</div>
</body>
</html>
```

FILE: styles.css
```css
* { box-sizing: border-box; }
html, body { margin: 0; padding: 0; }
body { width: 1600px; height: 920px; overflow: hidden; background: #fff; font-family: "Open Sans", "Liberation Sans", sans-serif; color: #444; }
.sprite { position: absolute; width: 0; height: 0; }
svg { display: block; flex: none; fill: none; stroke: currentColor; stroke-width: 1.2; }
text { stroke: none; fill: currentColor; }
a { color: inherit; text-decoration: none; }

.slide-head { height: 120px; display: flex; justify-content: space-between; align-items: flex-start; }
.slide-title { margin: 26px 0 0; font: 500 43px/48px Roboto, "Liberation Sans", sans-serif; letter-spacing: .28px; color: #0c0c0c; }
.leaf { width: 64px; height: 56px; margin-top: 20px; }
.leaf-shape { fill: #e2e4e2; stroke: none; }

.app { height: 800px; margin-right: 2px; border-top: 2px solid #dfe1df; border-left: 2px solid #dfe1df; border-bottom: 2px solid #dfe1df; display: flex; flex-direction: column; overflow: hidden; filter: blur(.25px); }

.topbar { height: 42px; flex: none; background: #2f4050; color: #fff; display: flex; align-items: center; padding-left: 13px; }
.waffle { width: 15px; height: 15px; stroke: none; margin-bottom: 2px; }
.waffle-dots { fill: #fff; stroke: none; }
.seko-dot { display: flex; align-items: center; justify-content: center; flex: none; border-radius: 50%; background: #e4202c; color: #fff; font: italic 700 8px "Liberation Sans", sans-serif; }
.seko-dot-top { width: 28px; height: 28px; margin-left: 23px; }
.brand { margin-left: 7px; padding-left: 8px; border-left: 1px solid #fff; height: 27px; line-height: 25px; font-size: 13.500px; font-weight: 600; width: 81px; }
.ws-name { font-size: 12.300px; width: 531px; white-space: nowrap; margin-bottom: 2px; }
.crumb { font-size: 12px; width: 47px; margin-bottom: 1px; }
.crumb-sep { width: 1px; height: 16px; background: #cfd5da; margin-right: 16px; margin-bottom: 1px; }
.crumb-data { font-size: 12.400px; width: 133px; white-space: nowrap; margin-bottom: 1px; }
.ic-12 { width: 12px; height: 12px; }
.ic-14 { width: 14px; height: 14px; }
.ic-16 { width: 16px; height: 16px; }
.ic-18 { width: 18px; height: 18px; }
.ic-8 { width: 8px; height: 8px; }
.ic-white { color: #fff; stroke-width: 1.4; }
.search { margin-left: 303px; width: 120px; height: 30px; margin-bottom: 1px; background: #f1f1f0; color: #666; display: flex; align-items: center; gap: 7px; padding-left: 15px; font-size: 12px; }
.search-ic { color: #555; }
.tb-ic { width: 19px; height: 19px; margin-left: 25px; margin-bottom: 3px; color: #fff; }
.tb-first { margin-left: 17px; }
.help { margin-left: 31px; margin-bottom: 3px; width: 14px; font: 19px/20px "Open Sans", sans-serif; color: #fff; }
.avatar { width: 32px; height: 32px; margin-left: 22px; margin-bottom: 2px; border-radius: 50%; background: #8c8c8c; display: flex; align-items: center; justify-content: center; flex: none; }
.avatar-ic { width: 20px; height: 20px; color: #fff; stroke-width: 1.5; }

.main { flex: 1; min-height: 0; display: flex; }

.nav { width: 202px; flex: none; background: #f3f2f1; border-right: 1px solid #ebeae9; color: #5a5a5a; font-size: 12px; display: flex; flex-direction: column; overflow: hidden; padding-left: 11px; }
.nav-burger { height: 37px; flex: none; display: flex; align-items: center; }
.nav-ic { width: 20px; height: 20px; margin-right: 10px; color: #5a5a5a; stroke-width: 1.1; }
.nav-item { height: 36.800px; flex: none; display: flex; align-items: center; position: relative; letter-spacing: .05px; }
.nav-chev { position: absolute; right: 12px; top: 12px; color: #666; }
.nav-rule { flex: none; height: 1px; margin: 6px 0 8px -11px; border-top: 1px dotted #d8d8d8; }
.nav-item-ws .nav-ic { margin-right: 11px; }
.nav-item-ws .nav-chev { right: 11px; }
.nav-item-seko .nav-chev { right: 12px; }
.seko-dot-nav { width: 24px; height: 22px; margin-right: 8px; font-size: 6px; margin-left: -1px; }
.seko-name { width: 106px; white-space: nowrap; }
.nav-item-get { margin-top: auto; margin-bottom: -14px; }

.pages { width: 167px; flex: none; background: #fff; border-right: 1px solid #d4d4d4; font-size: 12px; color: #5a5a5a; }
.pages-head { height: 49px; display: flex; align-items: flex-start; justify-content: space-between; padding: 11px 8px 0 15px; }
.pages-title { font-size: 14px; font-weight: 600; color: #4a4a4a; }
.pages-collapse { width: 18px; height: 16px; margin-top: 1px; color: #555; stroke-width: 1; }
.page-item { display: flex; align-items: center; height: 38.800px; padding-left: 16px; white-space: nowrap; position: relative; }
.page-item-active { background: #f3f2f1; color: #333; font-weight: 600; font-size: 12px; padding-top: 1px; }
.page-item-active::before { content: ""; position: absolute; left: 3px; top: 9px; width: 4px; height: 21px; border-radius: 2px; background: #2f4050; }

.content { flex: 1; min-width: 0; display: flex; flex-direction: column; }
.toolbar { height: 37px; flex: none; background: #f3f2f1; color: #5a5a5a; font-size: 12px; display: flex; align-items: center; padding-left: 6px; }
.tool { display: flex; align-items: center; gap: 6px; }
.tool-chev { color: #8a8a8a; stroke-width: 1; }
.tool-file { margin-right: 10px; }
.tool-file .tool-chev { margin-left: 2px; }
.tool-export { margin-right: 13px; }
.tool-export .tool-chev { margin-left: 2px; }
.tool-share { margin-right: 12px; }
.tool-teams { margin-right: 13px; }
.tool-ins { margin-right: 13px; }
.tool-sub { margin-right: 13px; }
.tool-edit { margin-right: 18px; }
.tool-dots { font-size: 16px; letter-spacing: 1px; color: #555; }
.ic-blue { color: #3a78ad; stroke-width: 1.3; }
.teams-a { fill: #7b83c9; stroke: none; }
.teams-b { fill: #4f59a8; stroke: none; }
.teams-t { stroke: #fff; stroke-width: 1.5; }
.pencil { stroke: #7a6a50; fill: #f0dfc0; }
.tool-right { margin-left: auto; margin-right: -3px; display: flex; align-items: center; color: #555; }
.ic-faint { color: #a8a8a8; }
.gap-a { margin-left: 15px; }
.gap-b { margin-left: 5px; }
.gap-c { margin-left: 12px; }
.gap-d { margin-left: 14px; }
.gap-e { margin-left: 11px; margin-right: 1px; }
.tool-sep { width: 1px; height: 26px; background: #b8b8b8; margin-left: 14px; }

.stage { flex: 1; min-height: 0; display: flex; }
.canvas { width: 1202px; flex: none; padding: 10px 6px 0 9.500px; display: flex; flex-direction: column; gap: 9.500px; background: #fff; border-top: 2px solid #eee; overflow: hidden; }
.card { background: #fff; border: 2px solid #5d6b78; border-radius: 10px; box-shadow: 0 0 4px rgba(0,0,0,.18); overflow: hidden; position: relative; flex: none; }
.card-title { height: 20px; padding-left: 6px; font-size: 11.500px; line-height: 20px; font-weight: 700; color: #435366; letter-spacing: .27px; white-space: nowrap; flex: none; }

.filter-card { height: 99.500px; margin-bottom: -.5px; background: #f3f2f1; margin-top: -2px; border-color: #4a5a68; padding: 4px 0 0 16.500px; }
.report-title { font-size: 15.900px; line-height: 21px; font-weight: 700; color: #2f4050; padding-left: 1px; }
.slicer-row { display: flex; gap: 20px; margin-top: 4px; }
.slicer-label { font-size: 10.500px; line-height: 14px; font-weight: 700; color: #3a3a3a; padding-left: 1px; white-space: nowrap; height: 14px; }
.dropdown { margin-top: 8px; height: 20px; background: #fff; color: #6a6a6a; font-size: 9.500px; display: flex; align-items: center; justify-content: space-between; padding: 0 6px 0 4px; }
.dropdown svg { color: #777; stroke-width: .9; }
.s-a { width: 153px; }
.s-b { width: 154px; }
.s-c { width: 130px; }
.s-d { width: 134px; }
.s-e { width: 131px; }
.date-range { margin-top: 7px; font-size: 10.500px; color: #a6a6a6; white-space: nowrap; }
.seko-logo { width: 118px; height: 38px; margin: -3px 9px 0 auto; stroke: none; }
.seko-word { font: italic 700 24px "Liberation Sans", sans-serif; fill: #0a0a0a; stroke: #0a0a0a; stroke-width: .8; }
.seko-360 { font: italic 700 15px "Liberation Sans", sans-serif; fill: #222; }
.swoosh-r { fill: #e8364a; stroke: none; }
.swoosh-o { fill: #f4cdb8; stroke: none; }
.logo-line { stroke: #ccc; stroke-width: .8; }
.logo-knob { fill: #9a9a9a; stroke: none; }
.logo-box { fill: #f6f6f5; stroke: #e4e4e4; stroke-width: .7; }

.row-mid { display: flex; gap: 10px; height: 283px; flex: none; }
.table-card { width: 588.500px; padding: 8px 0 0 7px; }
.chart-card { width: 588px; display: flex; flex-direction: column; }
.chart { width: 100%; flex: 1; min-height: 0; font-size: 10px; color: #555; }

.matrix { width: 565.500px; overflow: hidden; font: 400 10px/12px Roboto, "Liberation Sans", sans-serif; color: #4a4a4a; }
.tr { display: grid; grid-template-columns: 146px 63.500px 70px 73.500px 70px 70px 79px; width: 572px; height: 15.750px; align-items: stretch; }
.td { padding: 0 5px 0 0; text-align: right; line-height: 15.750px; white-space: nowrap; border-right: 1px solid #f0f0f0; }
.td-l { text-align: left; padding-left: 4px; border-right: 1px solid #5d6b78; }
.tr-b { background: #eeeeee; }
.tr-year { height: 14px; border-bottom: 1px solid #e8e8e8; }
.tr-year .td-l { line-height: 14px; border-right-color: #e6e6e6; }
.td-span-a { grid-column: 2 / span 3; padding-left: 5px; line-height: 14px; border-right: 1px solid #e6e6e6; }
.td-span-b { grid-column: 5 / span 3; padding-left: 5px; line-height: 14px; }
.tr-head { height: 34px; border-bottom: 2px solid #5d6b78; }
.tr-head .td-l { line-height: 18px; border-right-color: #e6e6e6; }
.th { padding: 3px 2px 0 5px; line-height: 12.500px; border-right: 1px solid #e6e6e6; }
.th-first { padding-right: 6px; }
.matrix-body { height: 195px; overflow: hidden; }
.tr-total { height: 20px; font-weight: 700; color: #333; }
.tr-total .td { line-height: 20px; }
.vscroll { position: absolute; right: 7px; top: 6px; width: 5px; height: 263px; background: #f4f4f4; color: #666; }
.vscroll svg { margin: 4px -1.500px 0; width: 8px; height: 8px; }
.vthumb { position: absolute; top: 27px; left: 0; width: 5px; height: 24px; background: #c9c9c9; }
.vdown { position: absolute; bottom: 3px; }
.flip { transform: scale(-1, -1); transform-origin: center; }
.hscroll { position: absolute; left: 10px; bottom: 6px; width: 562px; height: 8px; background: #f4f4f4; color: #666; display: flex; justify-content: space-between; align-items: center; padding: 0 8px; }
.hthumb { position: absolute; left: 20px; width: 508px; height: 8px; background: #c9c9c9; }

.row-bot { display: flex; height: 305px; flex: none; }
.bar-card-a { width: 297px; margin-right: 11px; display: flex; flex-direction: column; }
.bar-card-b { width: 281px; margin-right: 9.500px; display: flex; flex-direction: column; }
.map-card { width: 588px; display: flex; flex-direction: column; }

.legend text { font: 9.500px Roboto, sans-serif; fill: #666; }
.f-g { fill: #3cb44a; stroke: none; }
.f-r { fill: #e81a2c; stroke: none; }
.f-b { fill: #74b9dc; stroke: none; }
.f-y { fill: #f0c419; stroke: none; }
.f-br { fill: #b89a88; stroke: none; }
.f-gr { fill: #b8bcc0; stroke: none; }
.grid-h path, .grid-v path { stroke: #d8d8d8; stroke-width: 1; stroke-dasharray: 1 5; }
.axis-y text { font: 10px Roboto, sans-serif; fill: #666; text-anchor: middle; }
.wf-lab text { font: 9.800px Roboto, sans-serif; fill: #666; text-anchor: middle; }
.cat text { font: 10px Roboto, sans-serif; fill: #777; text-anchor: end; }
.axis-title { font: 10px Roboto, sans-serif; fill: #666; text-anchor: middle; }
.hbar rect { fill: #74b9dc; stroke: #bcdcee; stroke-width: .7; }
.cat-l text { font: 9.600px Roboto, sans-serif; fill: #666; text-anchor: end; }
.bar-card-a .cat-l text { font-size: 10px; }
.val text { font: 9.600px Roboto, sans-serif; fill: #666; }
.val .val-in { text-anchor: end; fill: #445; }
.tick text { font: 10px Roboto, sans-serif; fill: #666; text-anchor: middle; }

.ocean { fill: #aac7f0; stroke: none; }
.land { filter: blur(1.5px); }
.land path { fill: #f1f1ee; stroke: #f1f1ee; stroke-width: 3; stroke-linejoin: round; }
.land .water { fill: #aac7f0; stroke: #aac7f0; }
.map-lab text { font: 700 10.500px "Open Sans", sans-serif; fill: #333; text-anchor: middle; }
.map-sea text { font: 10.500px "Open Sans", sans-serif; fill: #6a85c4; text-anchor: middle; }
.bub ellipse { rx: 12.500px; ry: 15px; fill: rgba(80,170,200,.42); stroke: #2f8cab; stroke-width: 1; vector-effect: non-scaling-stroke; }
.bub .b-xl { rx: 36px; ry: 45px; }
.bub .b-lg { rx: 22px; ry: 27px; }
.ms-logo rect { stroke: none; }
.ms-r { fill: #f25022; }
.ms-g { fill: #7fba00; }
.ms-b { fill: #00a4ef; }
.ms-y { fill: #ffb900; }
.ms-text { font: 7.500px "Open Sans", sans-serif; fill: #777; }
.map-copy { font: 7.800px "Liberation Sans", sans-serif; fill: #333; white-space: pre; }
.map-link { fill: #3a5fb0; text-decoration: underline; }

.page-scroll { width: 6px; flex: none; background: #f7f7f7; border-right: 1px solid #d8d8d8; box-sizing: content-box; }
.page-thumb { display: block; height: 487px; background: #c6c8c8; }
.filters { flex: 1; min-width: 0; background: #fff; overflow: hidden; display: flex; flex-direction: column; align-items: center; padding-top: 11px; }
.filters-ic { width: 12px; height: 12px; color: #444; margin-left: 4px; }
.filters-fn { width: 8px; height: 8px; margin: 14px 0 0 8px; fill: #666; stroke: none; }
.filters-label { writing-mode: vertical-rl; font-size: 14px; margin: 9px 0 0 12px; color: #333; }
```
